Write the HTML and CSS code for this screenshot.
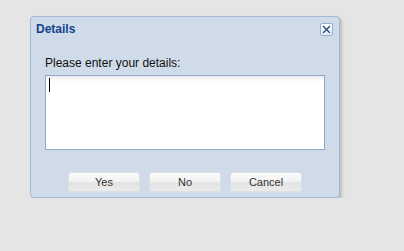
FILE: index.html
```html
<!DOCTYPE html>
<html lang="en">
<head>
  <meta charset="UTF-8" />
  <title>Details</title>
  <link rel="stylesheet" href="styles.css">
</head>
<body>
  <div class="window">
    <div class="header">
      <span class="title">Details</span>
      <span class="close">
        <svg width="9" height="9" viewBox="0 0 9 9"><path d="M1 1 L8 8 M8 1 L1 8" stroke="#2b4a7a" stroke-width="1.4" fill="none"/></svg>
      </span>
    </div>
    <div class="body">
      <label class="prompt">Please enter your details:</label>
      <div class="field"><span class="caret"></span></div>
      <div class="buttons">
        <button>Yes</button>
        <button>No</button>
        <button>Cancel</button>
      </div>
    </div>
  </div>
</body>
</html>
```

FILE: styles.css
```css
body { margin: 0; background: #e5e5e5; font-family: "Liberation Sans", Arial, sans-serif; }
.window { margin: 16px 0 0 30px; width: 308px; height: 180px; border: 1px solid #a3b8d2; border-radius: 4px; background: #cfdbe8; box-shadow: 2px 2px 3px rgba(0,0,0,0.18); display: flex; flex-direction: column; }
.header { display: flex; justify-content: space-between; align-items: center; height: 14px; padding: 5px 6px 0 5px; }
.title { font-size: 12px; font-weight: bold; color: #15428b; }
.close { width: 11px; height: 11px; border: 1px solid #8fadd6; border-radius: 2px; background: linear-gradient(#ffffff, #e4ecf6); display: flex; align-items: center; justify-content: center; }
.close svg { display: block; }
.body { padding: 0 14px; display: flex; flex-direction: column; }
.prompt { margin-top: 20px; font-size: 12px; line-height: 14px; color: #111; }
.field { margin-top: 5px; width: 272px; height: 69px; padding: 2px 3px; border: 1px solid #8ea9cc; background: linear-gradient(#ececec, #ffffff 6px); }
.caret { display: block; width: 1px; height: 14px; background: #000; }
.buttons { display: flex; justify-content: center; gap: 9px; margin-top: 22px; }
button { width: 72px; height: 20px; padding: 0; border: 1px solid #dbe1e8; border-radius: 3px; background: linear-gradient(#fbfbfb, #f3f3f3 45%, #e4e4e4 55%, #ebebeb); font-family: "Liberation Sans", Arial, sans-serif; font-size: 11px; color: #333; }
```
